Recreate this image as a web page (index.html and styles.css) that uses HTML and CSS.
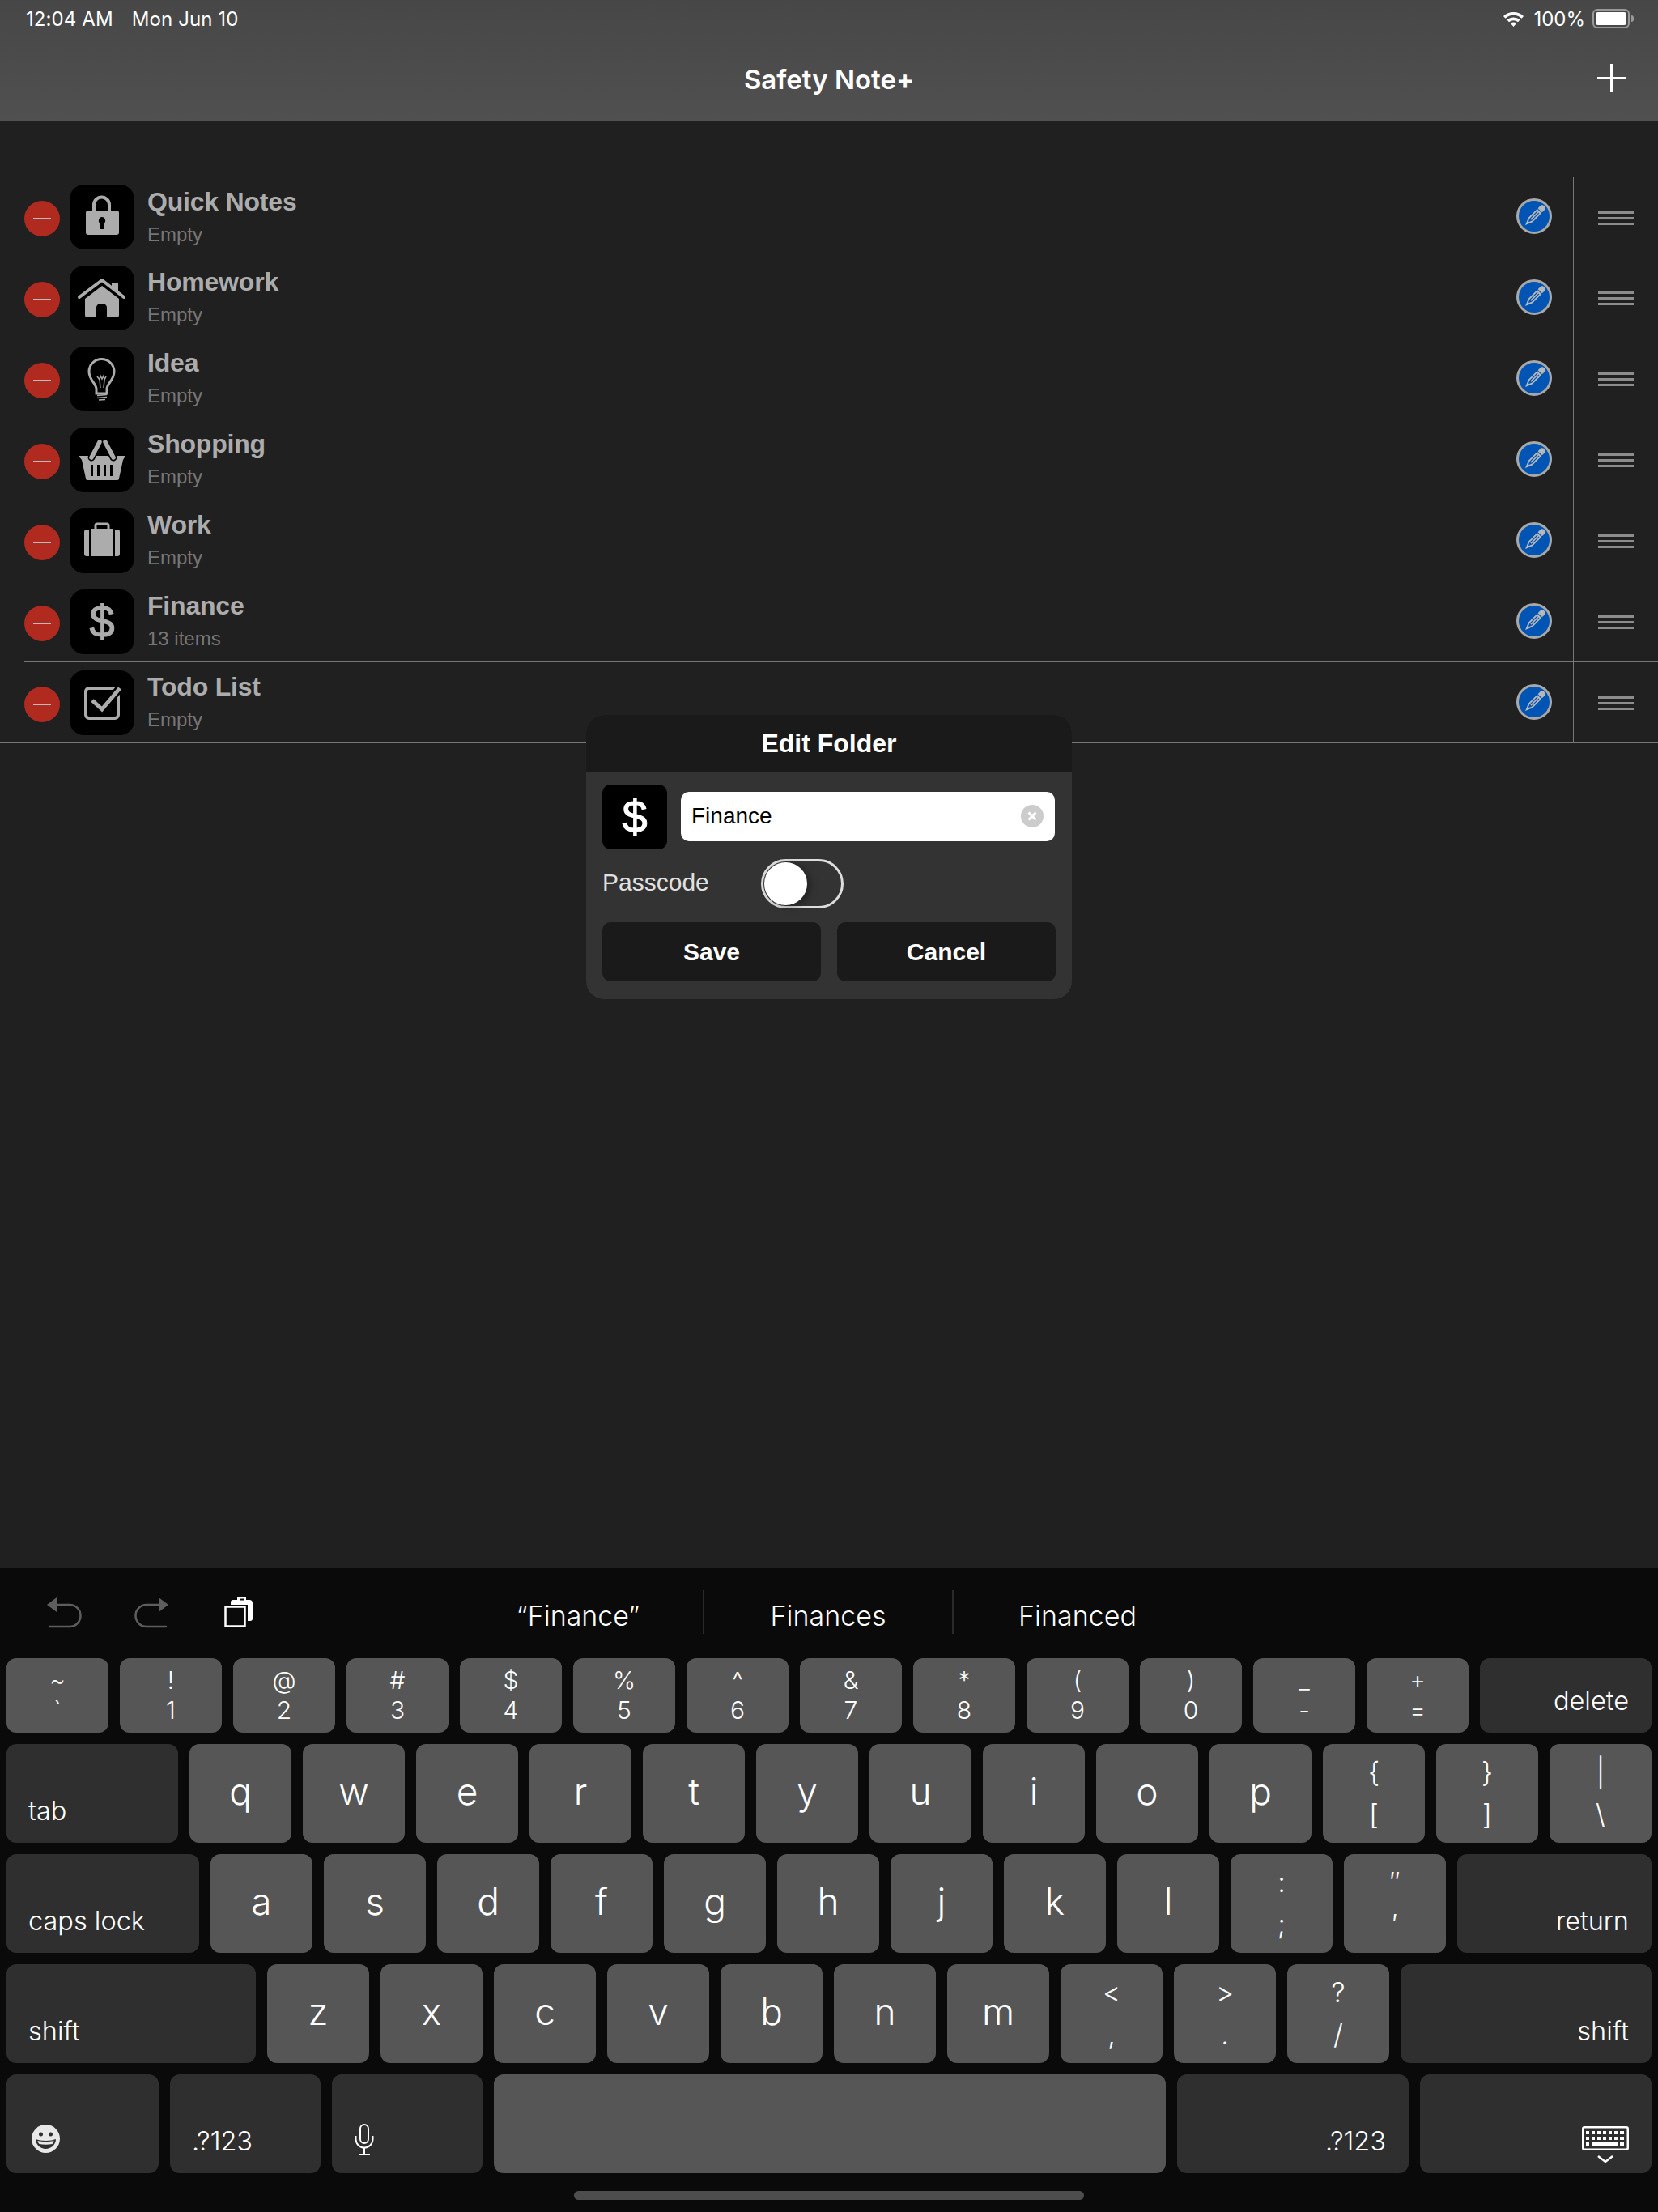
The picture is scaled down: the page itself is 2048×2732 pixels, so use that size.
FILE: index.html
```html
<!DOCTYPE html>
<html lang="en">
<head>
    <meta charset="UTF-8">
    <meta name="viewport" content="width=device-width, initial-scale=1.0">
    <title>Safety Note+</title>
    <link rel="stylesheet" href="styles.css">
</head>
<body>
    <header class="topbar">
        <div class="status">
            <div class="status-left"><span>12:04 AM</span><span>Mon Jun 10</span></div>
            <div class="status-right">
                <svg class="wifi" viewBox="0 0 28 20"><path d="M1.500 7A18 18 0 0 1 26.500 7L24 9.700A14.500 14.500 0 0 0 4 9.700Z M6 11.500A12 12 0 0 1 22 11.500L19.500 14.200A8.500 8.500 0 0 0 8.500 14.200Z M10.500 16A5.500 5.500 0 0 1 17.500 16L14 20Z" fill="#fff"/></svg>
                <span>100%</span>
                <div class="battery"><div class="battery-fill"></div></div>
                <div class="battery-nub"></div>
            </div>
        </div>
        <div class="nav">
            <div class="nav-title">Safety Note+</div>
            <svg class="nav-add" viewBox="0 0 35 35"><path d="M17.500 0V35M0 17.500H35" stroke="#fff" stroke-width="3"/></svg>
        </div>
    </header>

    <main class="folders">
        <div class="row">
            <div class="del"><i></i></div>
            <div class="folder-icon">
                <svg viewBox="0 0 80 80"><path d="M30 33V25a9.500 9.500 0 0 1 19 0V33" fill="none" stroke="#acacac" stroke-width="4"/><path fill-rule="evenodd" fill="#acacac" d="M23 32H58a3 3 0 0 1 3 3V59a3 3 0 0 1-3 3H23a3 3 0 0 1-3-3V35a3 3 0 0 1 3-3Z M40 40a4.500 4.500 0 0 0-2 8.300V55h4V48.300A4.500 4.500 0 0 0 40 40Z"/></svg>
            </div>
            <div class="row-text"><div class="row-title">Quick Notes</div><div class="row-sub">Empty</div></div>
            <div class="edit"><svg viewBox="0 0 44 44"><use href="#pencil"/></svg></div>
            <div class="handle"><i></i><i></i><i></i></div>
        </div>
        <div class="row">
            <div class="del"><i></i></div>
            <div class="folder-icon">
                <svg viewBox="0 0 80 80"><path d="M52 22H60V34L52 28Z" fill="#acacac"/><path d="M12 39L40 18L67 39" fill="none" stroke="#acacac" stroke-width="4" stroke-linecap="round" stroke-linejoin="round"/><path fill="#acacac" d="M40 25L61 41V61a3 3 0 0 1-3 3H46V52a5 5 0 0 0-5-5H38a5 5 0 0 0-5 5V64H22a3 3 0 0 1-3-3V41Z"/></svg>
            </div>
            <div class="row-text"><div class="row-title">Homework</div><div class="row-sub">Empty</div></div>
            <div class="edit"><svg viewBox="0 0 44 44"><use href="#pencil"/></svg></div>
            <div class="handle"><i></i><i></i><i></i></div>
        </div>
        <div class="row">
            <div class="del"><i></i></div>
            <div class="folder-icon">
                <svg viewBox="0 0 80 80"><g fill="none" stroke="#acacac"><path stroke-width="3" d="M33 58V52C32 45 24 41 24 31A15.500 15.500 0 0 1 55 31C55 41 47 45 46 52V58Z"/><path stroke-width="1.500" d="M34 37L37 41L38 36L40 40L42 36L43 41L45 37M37 41L38 51M43 41L42 51"/><path stroke-width="1.500" d="M34 60.500L46 59.500M34 63.500L46 62.500M36 66L44 65.500"/></g></svg>
            </div>
            <div class="row-text"><div class="row-title">Idea</div><div class="row-sub">Empty</div></div>
            <div class="edit"><svg viewBox="0 0 44 44"><use href="#pencil"/></svg></div>
            <div class="handle"><i></i><i></i><i></i></div>
        </div>
        <div class="row">
            <div class="del"><i></i></div>
            <div class="folder-icon">
                <svg viewBox="0 0 80 80"><path fill="#acacac" d="M11 35H69L66 40L61 63a2 2 0 0 1-2 2H22a2 2 0 0 1-2-2L15 40Z"/><path d="M27.500 46V60M35.500 46V60M43.500 46V60M51.500 46V60" stroke="#000" stroke-width="3"/><path d="M27 37L37 18M54 37L44 18" stroke="#000" stroke-width="9" stroke-linecap="round"/><path d="M27 37L37 18M54 37L44 18" stroke="#acacac" stroke-width="5.500" stroke-linecap="round"/></svg>
            </div>
            <div class="row-text"><div class="row-title">Shopping</div><div class="row-sub">Empty</div></div>
            <div class="edit"><svg viewBox="0 0 44 44"><use href="#pencil"/></svg></div>
            <div class="handle"><i></i><i></i><i></i></div>
        </div>
        <div class="row">
            <div class="del"><i></i></div>
            <div class="folder-icon">
                <svg viewBox="0 0 80 80"><g fill="#acacac"><path d="M21 26H24V59H21a3 3 0 0 1-3-3V29a3 3 0 0 1 3-3Z"/><rect x="27" y="25" width="26" height="34"/><path d="M56 26H59a3 3 0 0 1 3 3V56a3 3 0 0 1-3 3H56Z"/></g><path d="M32 25V21a2 2 0 0 1 2-2H46a2 2 0 0 1 2 2V25" fill="none" stroke="#acacac" stroke-width="3"/></svg>
            </div>
            <div class="row-text"><div class="row-title">Work</div><div class="row-sub">Empty</div></div>
            <div class="edit"><svg viewBox="0 0 44 44"><use href="#pencil"/></svg></div>
            <div class="handle"><i></i><i></i><i></i></div>
        </div>
        <div class="row">
            <div class="del"><i></i></div>
            <div class="folder-icon folder-dollar">$</div>
            <div class="row-text"><div class="row-title">Finance</div><div class="row-sub">13 items</div></div>
            <div class="edit"><svg viewBox="0 0 44 44"><use href="#pencil"/></svg></div>
            <div class="handle"><i></i><i></i><i></i></div>
        </div>
        <div class="row">
            <div class="del"><i></i></div>
            <div class="folder-icon">
                <svg viewBox="0 0 80 80"><rect x="20" y="22" width="40" height="37" rx="4" fill="none" stroke="#acacac" stroke-width="4"/><path d="M28 37L40 48L62 22" fill="none" stroke="#000" stroke-width="10"/><path d="M28 37L40 48L62 22" fill="none" stroke="#acacac" stroke-width="5"/></svg>
            </div>
            <div class="row-text"><div class="row-title">Todo List</div><div class="row-sub">Empty</div></div>
            <div class="edit"><svg viewBox="0 0 44 44"><use href="#pencil"/></svg></div>
            <div class="handle"><i></i><i></i><i></i></div>
        </div>
    </main>

    <div class="modal">
        <div class="modal-head">Edit Folder</div>
        <div class="modal-body">
            <div class="modal-name">
                <div class="modal-icon">$</div>
                <div class="name-input">
                    <span>Finance</span>
                    <svg class="clear" viewBox="0 0 28 28"><circle cx="14" cy="14" r="14" fill="#ccc"/><path d="M9.500 9.500L18.500 18.500M18.500 9.500L9.500 18.500" stroke="#fff" stroke-width="3"/></svg>
                </div>
            </div>
            <div class="modal-pass">
                <div class="pass-label">Passcode</div>
                <div class="toggle"><div class="knob"></div></div>
            </div>
            <div class="modal-actions">
                <div class="btn">Save</div>
                <div class="btn">Cancel</div>
            </div>
        </div>
    </div>

    <section class="keyboard">
        <div class="kb-tools">
            <div class="tools">
                <svg class="tool" viewBox="18 12 46 40"><path d="M18 22L30 13V31Z" fill="#5e5e5e"/><path d="M30 22H46A13.500 13.500 0 0 1 46 49H21" fill="none" stroke="#5e5e5e" stroke-width="2.500" stroke-linecap="round"/></svg>
                <svg class="tool" viewBox="125 12 46 40"><path d="M168 22L156 13V31Z" fill="#5e5e5e"/><path d="M156 22H141A13.500 13.500 0 0 0 141 49H165" fill="none" stroke="#5e5e5e" stroke-width="2.500" stroke-linecap="round"/></svg>
                <svg class="tool tool-paste" viewBox="236 12 38 40"><path fill="#fff" d="M245 22V19a3 3 0 0 1 3-3H253V13H264V16H268a4 4 0 0 1 4 4V39a3 3 0 0 1-3 3H266V22Z"/><rect x="256" y="14.500" width="6" height="2" fill="#0a0a0a"/><rect x="238.500" y="24.500" width="24" height="24" fill="none" stroke="#fff" stroke-width="2.500"/></svg>
            </div>
            <div class="suggest">
                <div class="sug">“Finance”</div>
                <div class="sug">Finances</div>
                <div class="sug">Financed</div>
            </div>
        </div>

        <div class="kb-row kb-row-num">
            <div class="key key-sym"><span>~</span><span>`</span></div>
            <div class="key key-sym"><span>!</span><span>1</span></div>
            <div class="key key-sym"><span>@</span><span>2</span></div>
            <div class="key key-sym"><span>#</span><span>3</span></div>
            <div class="key key-sym"><span>$</span><span>4</span></div>
            <div class="key key-sym"><span>%</span><span>5</span></div>
            <div class="key key-sym"><span>^</span><span>6</span></div>
            <div class="key key-sym"><span>&amp;</span><span>7</span></div>
            <div class="key key-sym"><span>*</span><span>8</span></div>
            <div class="key key-sym"><span>(</span><span>9</span></div>
            <div class="key key-sym"><span>)</span><span>0</span></div>
            <div class="key key-sym"><span>_</span><span>-</span></div>
            <div class="key key-sym"><span>+</span><span>=</span></div>
            <div class="key key-mod key-right w-212">delete</div>
        </div>
        <div class="kb-row">
            <div class="key key-mod w-212">tab</div>
            <div class="key key-letter">q</div>
            <div class="key key-letter">w</div>
            <div class="key key-letter">e</div>
            <div class="key key-letter">r</div>
            <div class="key key-letter">t</div>
            <div class="key key-letter">y</div>
            <div class="key key-letter">u</div>
            <div class="key key-letter">i</div>
            <div class="key key-letter">o</div>
            <div class="key key-letter">p</div>
            <div class="key key-sym"><span>{</span><span>[</span></div>
            <div class="key key-sym"><span>}</span><span>]</span></div>
            <div class="key key-sym"><span>|</span><span>\</span></div>
        </div>
        <div class="kb-row">
            <div class="key key-mod w-238">caps lock</div>
            <div class="key key-letter">a</div>
            <div class="key key-letter">s</div>
            <div class="key key-letter">d</div>
            <div class="key key-letter">f</div>
            <div class="key key-letter">g</div>
            <div class="key key-letter">h</div>
            <div class="key key-letter">j</div>
            <div class="key key-letter">k</div>
            <div class="key key-letter">l</div>
            <div class="key key-sym"><span>:</span><span>;</span></div>
            <div class="key key-sym"><span>″</span><span>′</span></div>
            <div class="key key-mod key-right w-240">return</div>
        </div>
        <div class="kb-row">
            <div class="key key-mod w-308">shift</div>
            <div class="key key-letter">z</div>
            <div class="key key-letter">x</div>
            <div class="key key-letter">c</div>
            <div class="key key-letter">v</div>
            <div class="key key-letter">b</div>
            <div class="key key-letter">n</div>
            <div class="key key-letter">m</div>
            <div class="key key-sym"><span>&lt;</span><span>,</span></div>
            <div class="key key-sym"><span>&gt;</span><span>.</span></div>
            <div class="key key-sym"><span>?</span><span>/</span></div>
            <div class="key key-mod key-right w-310">shift</div>
        </div>
        <div class="kb-row">
            <div class="key key-mod key-icon w-188">
                <svg class="emoji" viewBox="0 0 35 35"><circle cx="17.500" cy="17.500" r="17.500" fill="#e8e8e8"/><circle cx="11.500" cy="12" r="2.500" fill="#2f2f2f"/><circle cx="23.500" cy="12" r="2.500" fill="#2f2f2f"/><path d="M5 18C11 20.500 24 20.500 30 18C30 25 24 30 17.500 30C11 30 5 25 5 18Z" fill="#2f2f2f"/><path d="M7.500 20C13 21.500 22 21.500 27.500 20C27 22.500 26.500 23 25.500 24C20 25 15 25 9.500 24C8.500 23 8 22.500 7.500 20Z" fill="#e8e8e8"/></svg>
            </div>
            <div class="key key-mod w-186">.?123</div>
            <div class="key key-mod key-icon key-mic w-186">
                <svg class="mic" viewBox="0 0 24 39"><rect x="7" y="1" width="10" height="23" rx="5" fill="none" stroke="#fff" stroke-width="2"/><path d="M1.500 15V19a10.500 10.500 0 0 0 21 0V15M12 30V37M5 38H19" fill="none" stroke="#fff" stroke-width="2"/></svg>
            </div>
            <div class="key w-830"></div>
            <div class="key key-mod key-right w-286">.?123</div>
            <div class="key key-mod key-right key-hide w-286">
                <svg class="kb-glyph" viewBox="0 0 58 46"><rect x="1.250" y="1.250" width="55.500" height="27.500" rx="2" fill="none" stroke="#fff" stroke-width="2.500"/><path d="M5 6h4v4H5zM12 6h4v4h-4zM19 6h4v4h-4zM26 6h4v4h-4zM33 6h4v4h-4zM40 6h4v4h-4zM47 6h5v4h-5zM5 13h4v4H5zM12 13h4v4h-4zM19 13h4v4h-4zM26 13h4v4h-4zM33 13h4v4h-4zM40 13h4v4h-4zM47 13h5v4h-5zM5 20h4v4H5zM12 20h33v4H12zM47 20h5v4h-5z" fill="#fff"/><path d="M20 37L29 44L38 37" fill="none" stroke="#fff" stroke-width="2.500"/></svg>
            </div>
        </div>
        <div class="home-bar"></div>
    </section>

    <svg class="defs" width="0" height="0">
        <symbol id="pencil" viewBox="0 0 44 44">
            <g transform="rotate(45 22 22)">
                <path d="M17.500 5a4.500 4.500 0 0 1 9 0V9.500H17.500Z" fill="#b8b8b8"/>
                <path d="M18.500 12H25.500V29.500L22 38L18.500 29.500Z" fill="none" stroke="#b8b8b8" stroke-width="2.200"/>
                <path d="M21 12V29H23V12Z" fill="#b8b8b8"/>
                <path d="M19.800 33.500H24.200L22 40Z" fill="#b8b8b8"/>
            </g>
        </symbol>
    </svg>
</body>
</html>
```

FILE: styles.css
```css
* {
    box-sizing: border-box;
}

body {
    margin: 0;
    width: 2048px;
    height: 2732px;
    position: relative;
    overflow: hidden;
    display: flex;
    flex-direction: column;
    background-color: #202020;
    font-family: "Liberation Sans", Arial, sans-serif;
    color: white;
}

.defs {
    position: absolute;
}

/* top bar */
.topbar {
    height: 149px;
    background: linear-gradient(#474747, #505050);
    font-family: Inter, sans-serif;
    flex-shrink: 0;
}

.status {
    height: 46px;
    padding: 0 30px 0 32px;
    display: flex;
    justify-content: space-between;
    align-items: center;
    font-size: 24px;
}

.status-left {
    display: flex;
    gap: 23px;
    letter-spacing: 0.1px;
}

.status-right {
    display: flex;
    align-items: center;
}

.wifi {
    width: 29px;
    height: 20px;
    margin-right: 10px;
}

.battery {
    width: 46px;
    height: 24px;
    margin-left: 9px;
    padding: 2px;
    border: 2px solid #999;
    border-radius: 6px;
}

.battery-fill {
    height: 100%;
    background-color: white;
    border-radius: 3px;
}

.battery-nub {
    width: 3px;
    height: 8px;
    margin-left: 2px;
    background-color: #999;
    border-radius: 0 3px 3px 0;
}

.nav {
    height: 103px;
    padding: 0 40px 2px 0;
    display: flex;
    justify-content: flex-end;
    align-items: center;
    position: relative;
}

.nav-title {
    position: absolute;
    left: 0;
    right: 0;
    top: 33px;
    text-align: center;
    font-size: 33px;
    font-weight: 600;
    line-height: 38px;
}

.nav-add {
    width: 35px;
    height: 35px;
}

/* folder list */
.folders {
    margin-top: 69px;
    border-top: 1px solid #777;
    border-bottom: 1px solid #777;
    flex-shrink: 0;
    margin-bottom: -1px;
}

.row {
    height: 100px;
    margin-left: 30px;
    display: flex;
    align-items: center;
    border-bottom: 1px solid #777;
}

.row:first-child {
    height: 99px;
}

.row:last-child {
    border-bottom: none;
    height: 99px;
}

.del {
    width: 44px;
    height: 44px;
    margin-top: 4px;
    margin-right: 12px;
    border-radius: 50%;
    background-color: #b02a20;
    display: flex;
    justify-content: center;
    align-items: center;
}

.del i {
    width: 22px;
    height: 2px;
    background-color: #bbb;
}

.folder-icon {
    width: 80px;
    height: 80px;
    border-radius: 18px;
    background-color: black;
    flex-shrink: 0;
}

.folder-icon svg {
    display: block;
    width: 80px;
    height: 80px;
}

.folder-dollar {
    color: #acacac;
    font-size: 56px;
    -webkit-text-stroke: 1px #acacac;
    line-height: 80px;
    text-align: center;
}

.row-text {
    margin-left: 16px;
    flex: 1;
}

.row-title {
    font-size: 32px;
    font-weight: bold;
    line-height: 34px;
    color: #acacac;
    letter-spacing: -0.2px;
}

.row-sub {
    margin-top: 9px;
    font-size: 24px;
    line-height: 30px;
    color: #767676;
}

.edit {
    width: 44px;
    height: 44px;
    margin-top: -2px;
    margin-right: 26px;
    border-radius: 50%;
    background-color: #0054b4;
    border: 3px solid #a8a8a8;
    overflow: hidden;
    display: flex;
    justify-content: center;
    align-items: center;
}

.edit svg {
    width: 36px;
    height: 36px;
    flex-shrink: 0;
}

.handle {
    width: 105px;
    align-self: stretch;
    border-left: 1px solid #777;
    padding-left: 30px;
    padding-top: 2px;
    display: flex;
    flex-direction: column;
    justify-content: center;
    gap: 4px;
}

.handle i {
    width: 44px;
    height: 3px;
    background-color: #8c8c8c;
}

/* edit dialog */
.modal {
    position: absolute;
    left: 724px;
    top: 883px;
    width: 600px;
    height: 351px;
    border-radius: 22px;
    background-color: #333;
    overflow: hidden;
}

.modal-head {
    height: 70px;
    background-color: #1a1a1a;
    font-size: 32px;
    font-weight: bold;
    line-height: 70px;
    text-align: center;
}

.modal-body {
    padding: 16px 20px 0;
}

.modal-name {
    display: flex;
    align-items: center;
    gap: 17px;
}

.modal-icon {
    width: 80px;
    height: 80px;
    border-radius: 10px;
    background-color: black;
    font-size: 56px;
    -webkit-text-stroke: 1px white;
    line-height: 80px;
    text-align: center;
}

.name-input {
    width: 462px;
    height: 61px;
    margin-top: -2px;
    padding: 0 14px 0 13px;
    border-radius: 10px;
    background-color: white;
    color: black;
    font-size: 28px;
    display: flex;
    justify-content: space-between;
    align-items: center;
}

.clear {
    width: 28px;
    height: 28px;
}

.modal-pass {
    margin-top: 12px;
    display: flex;
    align-items: center;
}

.pass-label {
    width: 196px;
    margin-top: -3px;
    font-size: 30px;
    color: #e0e0e0;
}

.toggle {
    width: 102px;
    height: 61px;
    padding: 1px;
    border: 3px solid #ddd;
    border-radius: 31px;
}

.knob {
    width: 53px;
    height: 53px;
    border-radius: 50%;
    background-color: white;
    box-shadow: 4px 2px 8px rgba(0, 0, 0, 0.35);
}

.modal-actions {
    margin-top: 17px;
    display: flex;
    gap: 20px;
}

.btn {
    width: 270px;
    height: 73px;
    border-radius: 10px;
    background-color: #1a1a1a;
    font-size: 30px;
    font-weight: bold;
    line-height: 73px;
    text-align: center;
}

/* keyboard */
.keyboard {
    margin-top: auto;
    height: 796px;
    padding: 0 8px;
    background-color: #0a0a0a;
    font-family: Inter, sans-serif;
    font-weight: 300;
    flex-shrink: 0;
}

.kb-tools {
    height: 112px;
    margin: 0 -8px;
    display: grid;
    grid-template-columns: 1fr auto 1fr;
    align-items: center;
}

.tools {
    padding-left: 58px;
    display: flex;
    gap: 61px;
}

.tool {
    width: 46px;
    height: 40px;
}

.tool-paste {
    width: 38px;
    margin-left: 4px;
}

.suggest {
    margin-left: -4px;
    display: flex;
}

.sug {
    width: 308px;
    height: 54px;
    margin-top: -2px;
    border-left: 2px solid #2a2a2a;
    font-size: 34px;
    line-height: 63px;
    text-align: center;
}

.sug:first-child {
    border-left: none;
}

.kb-row {
    height: 122px;
    margin-bottom: 14px;
    display: flex;
    gap: 14px;
}

.kb-row-num {
    height: 92px;
}

.key {
    width: 126px;
    flex-shrink: 0;
    border-radius: 12px;
    background-color: #565656;
}

.key-letter {
    font-size: 46px;
    line-height: 116px;
    text-align: center;
}

.key-sym {
    font-size: 34px;
    line-height: 52px;
    padding-top: 9px;
    text-align: center;
    display: flex;
    flex-direction: column;
}

.kb-row-num .key-sym {
    font-size: 30px;
    line-height: 37px;
}

.key-mod {
    background-color: #2f2f2f;
    padding: 0 28px 19px 27px;
    font-size: 32.5px;
    line-height: 40px;
    display: flex;
    align-items: flex-end;
}

.key-right {
    justify-content: flex-end;
}

.key-icon {
    padding: 0 0 22px 31px;
}

.key-mic {
    padding-left: 28px;
}

.key-hide {
    padding: 0 28px 12px 0;
}

.emoji {
    width: 35px;
    height: 35px;
    margin-bottom: 3px;
}

.mic {
    width: 24px;
    height: 39px;
}

.kb-glyph {
    width: 58px;
    height: 46px;
}

.w-186 { width: 186px; }
.w-188 { width: 188px; }
.w-212 { width: 212px; }
.w-238 { width: 238px; }
.w-240 { width: 240px; }
.w-286 { width: 286px; }
.w-308 { width: 308px; }
.w-310 { width: 310px; }
.w-830 { width: 830px; }

.home-bar {
    width: 630px;
    height: 11px;
    margin: 22px auto 0;
    border-radius: 6px;
    background-color: #4d4d4d;
}
```
